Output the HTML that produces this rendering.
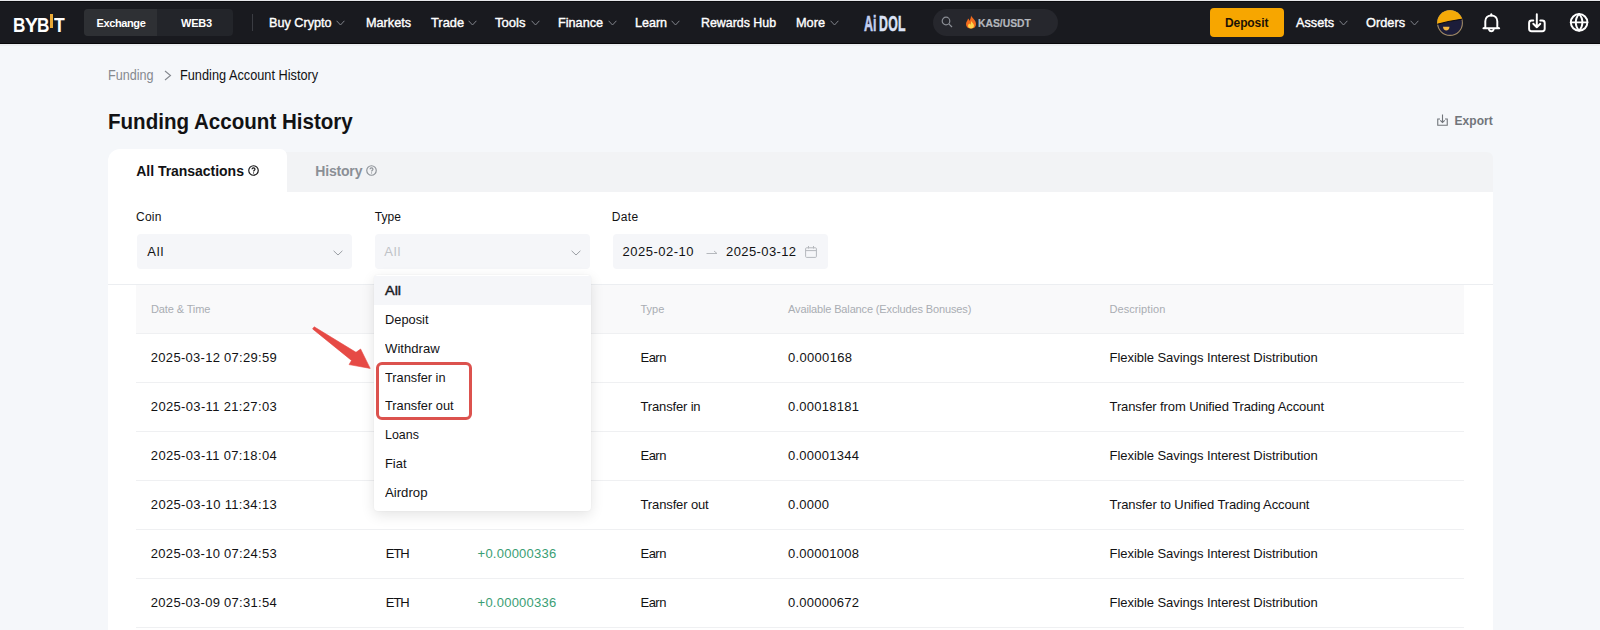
<!DOCTYPE html>
<html><head><meta charset="utf-8"><style>
html,body{margin:0;padding:0;width:1600px;height:630px;overflow:hidden;background:#f5f7fa}
body{position:relative;font-family:"Liberation Sans", sans-serif}
.t{position:absolute;line-height:1;white-space:nowrap;font-family:"Liberation Sans", sans-serif}
</style></head><body>
<div style="position:absolute;left:0px;top:0px;width:1600px;height:630px;background:#f5f7fa"></div>
<div style="position:absolute;left:0px;top:1px;width:1600px;height:43px;background:#191a1f"></div>
<div style="position:absolute;left:0px;top:0px;width:1600px;height:1px;background:#e6e7ea"></div>
<div style="position:absolute;left:0px;top:1px;width:1600px;height:1px;background:#0b0b0e"></div>
<div style="position:absolute;left:0px;top:42.5px;width:1600px;height:1.5px;background:#08080a"></div>
<div style="position:absolute;left:0px;top:44px;width:1600px;height:1.5px;background:#eceef1"></div>
<div class="t" style="left:13.3px;top:14.87px;font-size:20px;color:#ffffff;font-weight:bold;letter-spacing:0px;transform:scaleX(0.86);transform-origin:left">B</div>
<div class="t" style="left:24.8px;top:14.87px;font-size:20px;color:#ffffff;font-weight:bold;letter-spacing:0px;transform:scaleX(1.0);transform-origin:left">Y</div>
<div class="t" style="left:37.3px;top:14.87px;font-size:20px;color:#ffffff;font-weight:bold;letter-spacing:0px;transform:scaleX(0.86);transform-origin:left">B</div>
<div class="t" style="left:54.4px;top:14.87px;font-size:20px;color:#ffffff;font-weight:bold;letter-spacing:0px;transform:scaleX(0.88);transform-origin:left">T</div>
<div style="position:absolute;left:50px;top:14px;width:3.4px;height:14.2px;background:#e9a936"></div>
<div style="position:absolute;left:84px;top:9px;width:149px;height:27px;background:#23252a;border-radius:4px"></div>
<div style="position:absolute;left:84px;top:9px;width:73px;height:27px;background:#2e3034;border-radius:4px 0 0 4px"></div>
<div class="t" style="left:96.6px;top:17.89px;font-size:11px;color:#ffffff;font-weight:bold;letter-spacing:-0.4px;">Exchange</div>
<div class="t" style="left:181px;top:17.89px;font-size:11px;color:#ffffff;font-weight:bold;letter-spacing:-0.2px;">WEB3</div>
<div style="position:absolute;left:252px;top:14px;width:1px;height:17px;background:#3a3c42"></div>
<div class="t" style="left:269.4678118800622px;top:15.80px;font-size:13px;color:#ffffff;font-weight:normal;letter-spacing:0px;transform:scaleX(0.9726);transform-origin:left;-webkit-text-stroke:0.38px #fff;">Buy Crypto</div>
<svg style="position:absolute;left:335.5px;top:19.5px" width="9" height="6" viewBox="0 0 9 6"><path d="M0.6 0.8 L4.5 5.0 L8.4 0.8" fill="none" stroke="#80838a" stroke-width="1"/></svg>
<div class="t" style="left:365.966734770096px;top:15.80px;font-size:13px;color:#ffffff;font-weight:normal;letter-spacing:0px;transform:scaleX(0.9743);transform-origin:left;-webkit-text-stroke:0.38px #fff;">Markets</div>
<div class="t" style="left:430.9585010982077px;top:15.80px;font-size:13px;color:#ffffff;font-weight:normal;letter-spacing:0px;transform:scaleX(0.9869);transform-origin:left;-webkit-text-stroke:0.38px #fff;">Trade</div>
<svg style="position:absolute;left:467.5px;top:19.5px" width="9" height="6" viewBox="0 0 9 6"><path d="M0.6 0.8 L4.5 5.0 L8.4 0.8" fill="none" stroke="#80838a" stroke-width="1"/></svg>
<div class="t" style="left:495.44589410134733px;top:15.80px;font-size:13px;color:#ffffff;font-weight:normal;letter-spacing:0px;transform:scaleX(1.0063);transform-origin:left;-webkit-text-stroke:0.38px #fff;">Tools</div>
<svg style="position:absolute;left:530.5px;top:19.5px" width="9" height="6" viewBox="0 0 9 6"><path d="M0.6 0.8 L4.5 5.0 L8.4 0.8" fill="none" stroke="#80838a" stroke-width="1"/></svg>
<div class="t" style="left:557.9669962097422px;top:15.80px;font-size:13px;color:#ffffff;font-weight:normal;letter-spacing:0px;transform:scaleX(0.9739);transform-origin:left;-webkit-text-stroke:0.38px #fff;">Finance</div>
<svg style="position:absolute;left:607.5px;top:19.5px" width="9" height="6" viewBox="0 0 9 6"><path d="M0.6 0.8 L4.5 5.0 L8.4 0.8" fill="none" stroke="#80838a" stroke-width="1"/></svg>
<div class="t" style="left:634.9736414786577px;top:15.80px;font-size:13px;color:#ffffff;font-weight:normal;letter-spacing:0px;transform:scaleX(0.9636);transform-origin:left;-webkit-text-stroke:0.38px #fff;">Learn</div>
<svg style="position:absolute;left:670.5px;top:19.5px" width="9" height="6" viewBox="0 0 9 6"><path d="M0.6 0.8 L4.5 5.0 L8.4 0.8" fill="none" stroke="#80838a" stroke-width="1"/></svg>
<div class="t" style="left:700.9806680577013px;top:15.80px;font-size:13px;color:#ffffff;font-weight:normal;letter-spacing:0px;transform:scaleX(0.9528);transform-origin:left;-webkit-text-stroke:0.38px #fff;">Rewards Hub</div>
<div class="t" style="left:795.9626949401293px;top:15.80px;font-size:13px;color:#ffffff;font-weight:normal;letter-spacing:0px;transform:scaleX(0.9805);transform-origin:left;-webkit-text-stroke:0.38px #fff;">More</div>
<svg style="position:absolute;left:829.5px;top:19.5px" width="9" height="6" viewBox="0 0 9 6"><path d="M0.6 0.8 L4.5 5.0 L8.4 0.8" fill="none" stroke="#80838a" stroke-width="1"/></svg>
<div class="t" style="left:863.5px;top:12.52px;font-size:22.3px;color:#c3cff0;font-weight:bold;letter-spacing:0px;transform:scaleX(0.56);transform-origin:left;-webkit-text-stroke:0.6px #c3cff0">Ai</div>
<div class="t" style="left:879.3px;top:12.52px;font-size:22.3px;color:#dce3f7;font-weight:bold;letter-spacing:0.6px;transform:scaleX(0.55);transform-origin:left;-webkit-text-stroke:0.6px #dce3f7">DOL</div>
<div style="position:absolute;left:933px;top:9px;width:125px;height:27px;background:#26272d;border-radius:14px"></div>
<svg style="position:absolute;left:941px;top:16px" width="12" height="12" viewBox="0 0 12 12"><circle cx="5" cy="5" r="3.8" fill="none" stroke="#8b8e95" stroke-width="1.2"/><path d="M7.8 7.8 L11 11" stroke="#8b8e95" stroke-width="1.2"/></svg>
<svg style="position:absolute;left:965px;top:15px" width="12" height="14" viewBox="0 0 12 14"><path d="M6 0.5 C7 3 11 5 11 9 C11 12 9 13.5 6 13.5 C3 13.5 1 12 1 9 C1 6.5 3 5.5 3 3.5 C4.5 4.5 4.5 6 4.5 6 C5.5 4 6 2.5 6 0.5Z" fill="#f26b1d"/><path d="M6 6 C7.5 8 9 9 9 10.5 C9 12.5 7.5 13.5 6 13.5 C4.5 13.5 3 12.5 3 10.8 C3 9.5 4 9 4.5 8.5 C5 9.5 5.5 9.5 5.5 9.5 C6 8.5 6 7 6 6Z" fill="#ffd24a"/></svg>
<div class="t" style="left:978.4823294928269px;top:17.87px;font-size:11.5px;color:#b4b7bd;font-weight:bold;letter-spacing:0px;transform:scaleX(0.9003);transform-origin:left;-webkit-text-stroke:0.2px #b4b7bd;">KAS/USDT</div>
<div style="position:absolute;left:1210px;top:8px;width:74px;height:29px;background:#f7a600;border-radius:4px"></div>
<div class="t" style="left:1225px;top:17.24px;font-size:12px;color:#1b1206;font-weight:bold;letter-spacing:-0.1px;">Deposit</div>
<div class="t" style="left:1295.966207963012px;top:15.80px;font-size:13px;color:#ffffff;font-weight:normal;letter-spacing:0px;transform:scaleX(0.9751);transform-origin:left;-webkit-text-stroke:0.38px #fff;">Assets</div>
<svg style="position:absolute;left:1338.5px;top:19.5px" width="9" height="6" viewBox="0 0 9 6"><path d="M0.6 0.8 L4.5 5.0 L8.4 0.8" fill="none" stroke="#80838a" stroke-width="1"/></svg>
<div class="t" style="left:1365.9612924665762px;top:15.80px;font-size:13px;color:#ffffff;font-weight:normal;letter-spacing:0px;transform:scaleX(0.9826);transform-origin:left;-webkit-text-stroke:0.38px #fff;">Orders</div>
<svg style="position:absolute;left:1409.5px;top:19.5px" width="9" height="6" viewBox="0 0 9 6"><path d="M0.6 0.8 L4.5 5.0 L8.4 0.8" fill="none" stroke="#80838a" stroke-width="1"/></svg>
<svg style="position:absolute;left:1437px;top:9.5px" width="26" height="26" viewBox="0 0 26 26">
<defs><clipPath id="av"><circle cx="13" cy="13" r="12.8"/></clipPath></defs>
<circle cx="13" cy="13" r="12.4" fill="#1c1d3a" stroke="#a08a66" stroke-width="1.1"/>
<g clip-path="url(#av)"><path d="M-1 -1 H27 V8.8 C18 10 8 12 -1 14.6 Z" fill="#f5aa08" stroke="#0c0c14" stroke-width="1.1"/></g>
<path d="M6 16.8 H12.5 C12.5 19.2 11 20.6 9.25 20.6 C7.5 20.6 6 19.2 6 16.8Z" fill="#f3b640"/>
</svg>
<svg style="position:absolute;left:1478px;top:8px" width="120" height="28" viewBox="0 0 120 28" fill="none" stroke="#fff" stroke-width="1.95" stroke-linecap="round" stroke-linejoin="round">
<path d="M13.3 6.2 V7.4"/>
<path d="M7.3 19.2 V13.2 C7.3 9.7 9.9 7.4 13.3 7.4 C16.7 7.4 19.3 9.7 19.3 13.2 V19.2 C19.3 19.8 21.2 19.9 21.2 20.3 H5.4 C5.4 19.9 7.3 19.8 7.3 19.2 Z"/>
<path d="M11 21.6 C11.5 22.8 12.3 23.2 13.3 23.2 C14.3 23.2 15.1 22.8 15.6 21.6"/>
<path d="M58.8 6.2 V19.2 M55.3 15.8 L58.8 19.3 L62.3 15.8"/>
<path d="M55.3 12.4 H53.6 C52 12.4 51.1 13.3 51.1 14.9 V20.7 C51.1 22.3 52 23.2 53.6 23.2 H64.2 C65.8 23.2 66.7 22.3 66.7 20.7 V14.9 C66.7 13.3 65.8 12.4 64.2 12.4 H62.3"/>
<circle cx="101.1" cy="14.35" r="8.3"/>
<path d="M101.1 6.1 C96.7 10.5 96.7 18.2 101.1 22.6 C105.5 18.2 105.5 10.5 101.1 6.1 Z"/>
<path d="M92.8 14.35 H109.4"/>
</svg>
<div class="t" style="left:107.86880791065491px;top:67.65px;font-size:14px;color:#85898f;font-weight:normal;letter-spacing:0px;transform:scaleX(0.9017);transform-origin:left;">Funding</div>
<svg style="position:absolute;left:164px;top:70px" width="8" height="11" viewBox="0 0 8 11"><path d="M1 1 L6.5 5.5 L1 10" fill="none" stroke="#85898f" stroke-width="1.1"/></svg>
<div class="t" style="left:180.36285175964514px;top:67.65px;font-size:14px;color:#121214;font-weight:normal;letter-spacing:0px;transform:scaleX(0.9102);transform-origin:left;">Funding Account History</div>
<div class="t" style="left:107.97218369235009px;top:110.78px;font-size:22px;color:#121214;font-weight:bold;letter-spacing:0px;transform:scaleX(0.9344);transform-origin:left;">Funding Account History</div>
<svg style="position:absolute;left:1437px;top:113.5px" width="11" height="12" viewBox="0 0 11 12"><path d="M3 5 H0.75 V11.25 H10.25 V5 H8" fill="none" stroke="#71757a" stroke-width="1.1"/><path d="M5.5 0.5 V8.5 M3.3 6.3 L5.5 8.5 L7.7 6.3" fill="none" stroke="#71757a" stroke-width="1.1"/></svg>
<div class="t" style="left:1454.4px;top:115.34px;font-size:12px;color:#71757a;font-weight:bold;letter-spacing:0.091px;">Export</div>
<div style="position:absolute;left:286px;top:151.5px;width:1207px;height:40.5px;background:#f2f3f5;border-top-right-radius:6px"></div>
<div style="position:absolute;left:108px;top:149px;width:179px;height:481px;background:#fff;border-top-left-radius:12px;border-top-right-radius:7px"></div>
<div style="position:absolute;left:108px;top:192px;width:1385px;height:438px;background:#fff"></div>
<div class="t" style="left:136.3px;top:164.45px;font-size:14px;color:#121214;font-weight:bold;letter-spacing:-0.035px;">All Transactions</div>
<svg style="position:absolute;left:248px;top:165px" width="11" height="11" viewBox="0 0 11 11"><circle cx="5.5" cy="5.5" r="4.75" fill="none" stroke="#121214" stroke-width="1.15"/><path d="M4 4.3 C4 3.4 4.7 2.9 5.5 2.9 C6.3 2.9 7 3.4 7 4.2 C7 5.2 5.6 5.3 5.6 6.4" fill="none" stroke="#121214" stroke-width="1.1"/><circle cx="5.55" cy="7.9" r="0.6" fill="#121214"/></svg>
<div class="t" style="left:315.3px;top:164.35px;font-size:14px;color:#8b8f96;font-weight:bold;letter-spacing:-0.186px;">History</div>
<svg style="position:absolute;left:366px;top:165px" width="11" height="11" viewBox="0 0 11 11"><circle cx="5.5" cy="5.5" r="4.75" fill="none" stroke="#8e9298" stroke-width="1.15"/><path d="M4 4.3 C4 3.4 4.7 2.9 5.5 2.9 C6.3 2.9 7 3.4 7 4.2 C7 5.2 5.6 5.3 5.6 6.4" fill="none" stroke="#8e9298" stroke-width="1.1"/><circle cx="5.55" cy="7.9" r="0.6" fill="#8e9298"/></svg>
<div class="t" style="left:136.1px;top:210.54px;font-size:12px;color:#121214;font-weight:normal;letter-spacing:0.193px;">Coin</div>
<div class="t" style="left:374.7px;top:210.54px;font-size:12px;color:#121214;font-weight:normal;letter-spacing:0.115px;">Type</div>
<div class="t" style="left:611.6999999999999px;top:210.54px;font-size:12px;color:#121214;font-weight:normal;letter-spacing:0.371px;">Date</div>
<div style="position:absolute;left:137px;top:234px;width:215px;height:35px;background:#f5f6f9;border-radius:4px"></div>
<div style="position:absolute;left:374.5px;top:234px;width:215px;height:35px;background:#f5f6f9;border-radius:4px"></div>
<div style="position:absolute;left:612.5px;top:234px;width:215px;height:35px;background:#f5f6f9;border-radius:4px"></div>
<div class="t" style="left:147.35px;top:244.70px;font-size:13px;color:#121214;font-weight:normal;letter-spacing:0.796px;">All</div>
<svg style="position:absolute;left:333.0px;top:250px" width="10" height="6" viewBox="0 0 10 6"><path d="M0.6 0.8 L5.0 5.0 L9.4 0.8" fill="none" stroke="#9a9ea4" stroke-width="1"/></svg>
<div class="t" style="left:384.35px;top:244.70px;font-size:13px;color:#bfc2c7;font-weight:normal;letter-spacing:0.796px;">All</div>
<svg style="position:absolute;left:570.5px;top:250px" width="10" height="6" viewBox="0 0 10 6"><path d="M0.6 0.8 L5.0 5.0 L9.4 0.8" fill="none" stroke="#9a9ea4" stroke-width="1"/></svg>
<div class="t" style="left:622.5500000000001px;top:244.70px;font-size:13px;color:#121214;font-weight:normal;letter-spacing:0.482px;">2025-02-10</div>
<svg style="position:absolute;left:706px;top:249px" width="12" height="6" viewBox="0 0 12 6"><path d="M0.5 4.5 H11 L8 2" fill="none" stroke="#b5b8bd" stroke-width="1"/></svg>
<div class="t" style="left:726.0500000000001px;top:244.70px;font-size:13px;color:#121214;font-weight:normal;letter-spacing:0.393px;">2025-03-12</div>
<svg style="position:absolute;left:805px;top:245.5px" width="12" height="12" viewBox="0 0 12 12"><rect x="0.6" y="1.8" width="10.8" height="9.6" rx="1" fill="none" stroke="#b5b8bd" stroke-width="1"/><path d="M0.6 4.6 H11.4 M3.5 0 V2.5 M8.5 0 V2.5" stroke="#b5b8bd" stroke-width="1"/></svg>
<div style="position:absolute;left:108px;top:284px;width:1385px;height:1px;background:#eceef1"></div>
<div style="position:absolute;left:136px;top:285px;width:1328px;height:48.5px;background:#f9f9fa"></div>
<div class="t" style="left:150.95px;top:303.69px;font-size:11px;color:#a9adb3;font-weight:normal;letter-spacing:-0.114px;">Date &amp; Time</div>
<div class="t" style="left:385.95px;top:303.69px;font-size:11px;color:#a9adb3;font-weight:normal;letter-spacing:0.586px;">Coin</div>
<div class="t" style="left:477.05px;top:303.69px;font-size:11px;color:#a9adb3;font-weight:normal;letter-spacing:1.074px;">Amount</div>
<div class="t" style="left:640.45px;top:303.69px;font-size:11px;color:#a9adb3;font-weight:normal;letter-spacing:0.011px;">Type</div>
<div class="t" style="left:788.0500000000001px;top:303.69px;font-size:11px;color:#a9adb3;font-weight:normal;letter-spacing:-0.139px;">Available Balance (Excludes Bonuses)</div>
<div class="t" style="left:1109.45px;top:303.69px;font-size:11px;color:#a9adb3;font-weight:normal;letter-spacing:0.086px;">Description</div>
<div style="position:absolute;left:136px;top:333.2px;width:1328px;height:1px;background:#eff0f2"></div>
<div class="t" style="left:150.85px;top:351.10px;font-size:13px;color:#121214;font-weight:normal;letter-spacing:0.285px;">2025-03-12 07:29:59</div>
<div class="t" style="left:385.85px;top:351.10px;font-size:13px;color:#121214;font-weight:normal;letter-spacing:-1.08px;">ETH</div>
<div class="t" style="left:477.55px;top:351.10px;font-size:13px;color:#3a9e74;font-weight:normal;letter-spacing:0.237px;">+0.00000168</div>
<div class="t" style="left:640.5500000000001px;top:351.10px;font-size:13px;color:#121214;font-weight:normal;letter-spacing:-0.54px;">Earn</div>
<div class="t" style="left:787.95px;top:351.10px;font-size:13px;color:#121214;font-weight:normal;letter-spacing:0.323px;">0.0000168</div>
<div class="t" style="left:1109.55px;top:351.10px;font-size:13px;color:#121214;font-weight:normal;letter-spacing:-0.055px;">Flexible Savings Interest Distribution</div>
<div style="position:absolute;left:136px;top:382.09999999999997px;width:1328px;height:1px;background:#eff0f2"></div>
<div class="t" style="left:150.85px;top:400.00px;font-size:13px;color:#121214;font-weight:normal;letter-spacing:0.338px;">2025-03-11 21:27:03</div>
<div class="t" style="left:385.85px;top:400.00px;font-size:13px;color:#121214;font-weight:normal;letter-spacing:-1.08px;">ETH</div>
<div class="t" style="left:477.55px;top:400.00px;font-size:13px;color:#3a9e74;font-weight:normal;letter-spacing:0.237px;">+0.00018181</div>
<div class="t" style="left:640.5500000000001px;top:400.00px;font-size:13px;color:#121214;font-weight:normal;letter-spacing:-0.161px;">Transfer in</div>
<div class="t" style="left:787.95px;top:400.00px;font-size:13px;color:#121214;font-weight:normal;letter-spacing:0.273px;">0.00018181</div>
<div class="t" style="left:1109.55px;top:400.00px;font-size:13px;color:#121214;font-weight:normal;letter-spacing:-0.109px;">Transfer from Unified Trading Account</div>
<div style="position:absolute;left:136px;top:431.0px;width:1328px;height:1px;background:#eff0f2"></div>
<div class="t" style="left:150.85px;top:448.90px;font-size:13px;color:#121214;font-weight:normal;letter-spacing:0.338px;">2025-03-11 07:18:04</div>
<div class="t" style="left:385.85px;top:448.90px;font-size:13px;color:#121214;font-weight:normal;letter-spacing:-1.08px;">ETH</div>
<div class="t" style="left:477.55px;top:448.90px;font-size:13px;color:#3a9e74;font-weight:normal;letter-spacing:0.237px;">+0.00001344</div>
<div class="t" style="left:640.5500000000001px;top:448.90px;font-size:13px;color:#121214;font-weight:normal;letter-spacing:-0.54px;">Earn</div>
<div class="t" style="left:787.95px;top:448.90px;font-size:13px;color:#121214;font-weight:normal;letter-spacing:0.273px;">0.00001344</div>
<div class="t" style="left:1109.55px;top:448.90px;font-size:13px;color:#121214;font-weight:normal;letter-spacing:-0.055px;">Flexible Savings Interest Distribution</div>
<div style="position:absolute;left:136px;top:479.9px;width:1328px;height:1px;background:#eff0f2"></div>
<div class="t" style="left:150.85px;top:497.80px;font-size:13px;color:#121214;font-weight:normal;letter-spacing:0.338px;">2025-03-10 11:34:13</div>
<div class="t" style="left:385.85px;top:497.80px;font-size:13px;color:#121214;font-weight:normal;letter-spacing:-1.08px;">ETH</div>
<div class="t" style="left:477.55px;top:497.80px;font-size:13px;color:#3a9e74;font-weight:normal;letter-spacing:0.563px;">-0.00018181</div>
<div class="t" style="left:640.5500000000001px;top:497.80px;font-size:13px;color:#121214;font-weight:normal;letter-spacing:-0.133px;">Transfer out</div>
<div class="t" style="left:787.95px;top:497.80px;font-size:13px;color:#121214;font-weight:normal;letter-spacing:0.256px;">0.0000</div>
<div class="t" style="left:1109.55px;top:497.80px;font-size:13px;color:#121214;font-weight:normal;letter-spacing:-0.099px;">Transfer to Unified Trading Account</div>
<div style="position:absolute;left:136px;top:528.8px;width:1328px;height:1px;background:#eff0f2"></div>
<div class="t" style="left:150.85px;top:546.70px;font-size:13px;color:#121214;font-weight:normal;letter-spacing:0.285px;">2025-03-10 07:24:53</div>
<div class="t" style="left:385.85px;top:546.70px;font-size:13px;color:#121214;font-weight:normal;letter-spacing:-1.08px;">ETH</div>
<div class="t" style="left:477.55px;top:546.70px;font-size:13px;color:#3a9e74;font-weight:normal;letter-spacing:0.237px;">+0.00000336</div>
<div class="t" style="left:640.5500000000001px;top:546.70px;font-size:13px;color:#121214;font-weight:normal;letter-spacing:-0.54px;">Earn</div>
<div class="t" style="left:787.95px;top:546.70px;font-size:13px;color:#121214;font-weight:normal;letter-spacing:0.273px;">0.00001008</div>
<div class="t" style="left:1109.55px;top:546.70px;font-size:13px;color:#121214;font-weight:normal;letter-spacing:-0.055px;">Flexible Savings Interest Distribution</div>
<div style="position:absolute;left:136px;top:577.7px;width:1328px;height:1px;background:#eff0f2"></div>
<div class="t" style="left:150.85px;top:595.60px;font-size:13px;color:#121214;font-weight:normal;letter-spacing:0.285px;">2025-03-09 07:31:54</div>
<div class="t" style="left:385.85px;top:595.60px;font-size:13px;color:#121214;font-weight:normal;letter-spacing:-1.08px;">ETH</div>
<div class="t" style="left:477.55px;top:595.60px;font-size:13px;color:#3a9e74;font-weight:normal;letter-spacing:0.237px;">+0.00000336</div>
<div class="t" style="left:640.5500000000001px;top:595.60px;font-size:13px;color:#121214;font-weight:normal;letter-spacing:-0.54px;">Earn</div>
<div class="t" style="left:787.95px;top:595.60px;font-size:13px;color:#121214;font-weight:normal;letter-spacing:0.273px;">0.00000672</div>
<div class="t" style="left:1109.55px;top:595.60px;font-size:13px;color:#121214;font-weight:normal;letter-spacing:-0.055px;">Flexible Savings Interest Distribution</div>
<div style="position:absolute;left:136px;top:626.5999999999999px;width:1328px;height:1px;background:#eff0f2"></div>
<div style="position:absolute;left:374px;top:275px;width:216.5px;height:235.5px;background:#fff;border-radius:4px;box-shadow:0 4px 14px rgba(0,0,0,0.11), 0 0 2px rgba(0,0,0,0.05)"></div>
<div style="position:absolute;left:374px;top:276px;width:216.5px;height:28.6px;background:#f5f6f9"></div>
<div class="t" style="left:384.57655147203553px;top:284.27px;font-size:13.5px;color:#1a1b1f;font-weight:normal;letter-spacing:0px;transform:scaleX(1.0718);transform-origin:left;-webkit-text-stroke:0.45px #1a1b1f;">All</div>
<div class="t" style="left:384.65882323122935px;top:313.04px;font-size:13.5px;color:#121214;font-weight:normal;letter-spacing:0px;transform:scaleX(0.9499);transform-origin:left;">Deposit</div>
<div class="t" style="left:384.6439712057589px;top:341.81px;font-size:13.5px;color:#121214;font-weight:normal;letter-spacing:0px;transform:scaleX(0.9719);transform-origin:left;">Withdraw</div>
<div class="t" style="left:384.6623238067624px;top:370.58px;font-size:13.5px;color:#121214;font-weight:normal;letter-spacing:0px;transform:scaleX(0.9447);transform-origin:left;">Transfer in</div>
<div class="t" style="left:384.65954800413243px;top:399.35px;font-size:13.5px;color:#121214;font-weight:normal;letter-spacing:0px;transform:scaleX(0.9488);transform-origin:left;">Transfer out</div>
<div class="t" style="left:384.6782630637244px;top:428.12px;font-size:13.5px;color:#121214;font-weight:normal;letter-spacing:0px;transform:scaleX(0.9211);transform-origin:left;">Loans</div>
<div class="t" style="left:384.65572885422915px;top:456.89px;font-size:13.5px;color:#121214;font-weight:normal;letter-spacing:0px;transform:scaleX(0.9545);transform-origin:left;">Fiat</div>
<div class="t" style="left:384.6411240094031px;top:485.66px;font-size:13.5px;color:#121214;font-weight:normal;letter-spacing:0px;transform:scaleX(0.9761);transform-origin:left;">Airdrop</div>
<div style="position:absolute;left:375.5px;top:361.6px;width:96px;height:58.6px;border:3.8px solid #dc524e;border-radius:6px;box-sizing:border-box"></div>
<svg style="position:absolute;left:0;top:0" width="1600" height="630"><polygon points="312.6,328.9 351.5,360.4 349.1,364.6 370.2,368.4 360.6,349 356,352.3 314.2,326.8" fill="#e64a45" stroke="#e64a45" stroke-width="0.6" stroke-linejoin="round"/></svg>
</body></html>
